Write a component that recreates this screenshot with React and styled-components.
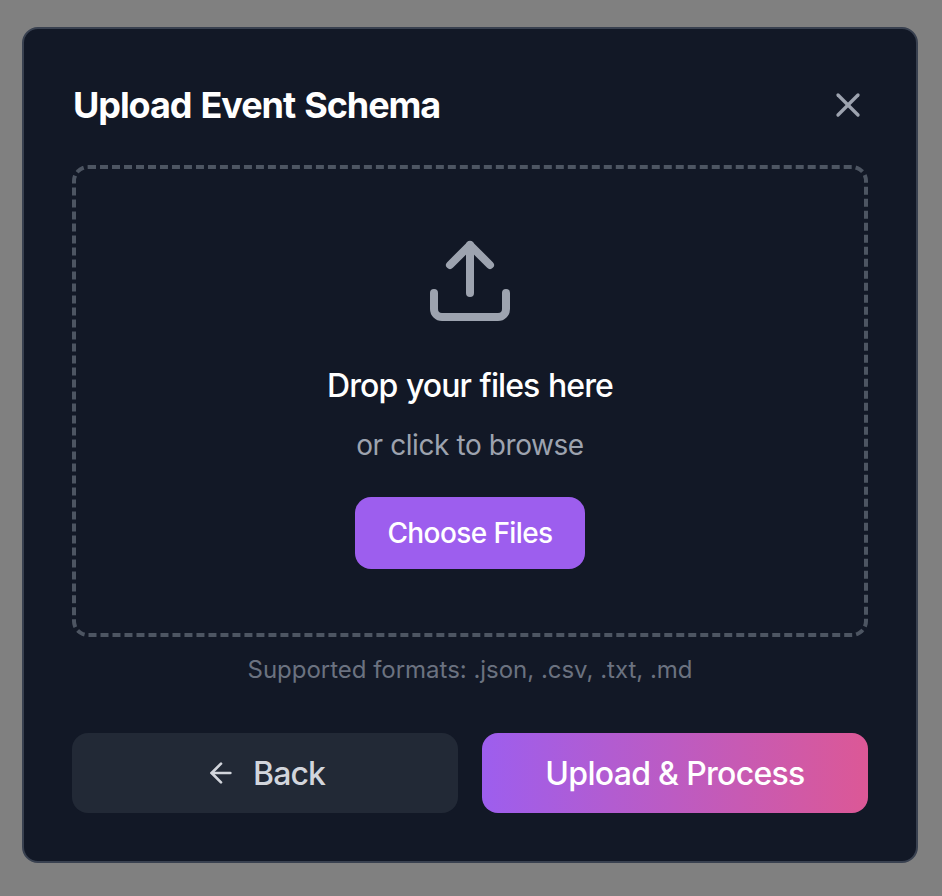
import React from 'react';
import styled, { createGlobalStyle } from 'styled-components';
import { X, Upload, ArrowLeft } from 'lucide-react';

const GlobalStyle = createGlobalStyle`
  *, *::before, *::after { box-sizing: border-box; }
  body { margin: 0; background: #808080; font-family: Inter, sans-serif; }
  h2, p { margin: 0; font-weight: 400; }
  button { font: inherit; border: 0; padding: 0; cursor: pointer; }
`;

const Backdrop = styled.div`
  min-height: 896px;
  padding: 27px 24px 33px 22px;
  background: #808080;
`;

const Modal = styled.section`
  height: 836px;
  padding: 48px;
  background: #121826;
  border: 2px solid #394150;
  border-radius: 16px;
`;

const Header = styled.header`
  display: flex;
  align-items: center;
  justify-content: space-between;
  height: 56px;
  margin-bottom: 32px;
`;

const Title = styled.h2`
  padding-left: 1px;
  color: #fff;
  font-size: 36px;
  font-weight: 650;
  line-height: 56px;
  letter-spacing: -1.08px;
  word-spacing: 1.8px;
  white-space: nowrap;
`;

const CloseButton = styled.button`
  display: flex;
  width: 40px;
  height: 40px;
  background: none;
  color: #9da3af;
`;

const DropZone = styled.div`
  display: flex;
  flex-direction: column;
  align-items: center;
  height: 472px;
  padding-top: 64px;
  border: 4px dashed #4d5562;
  border-radius: 16px;
  color: #9da3af;
`;

const Line = styled.p`
  color: ${(p) => p.$color};
  font-size: ${(p) => p.$size};
  font-weight: ${(p) => p.$weight || 400};
  line-height: ${(p) => p.$height};
  letter-spacing: ${(p) => p.$track};
  word-spacing: ${(p) => p.$words || 0};
  margin-top: ${(p) => p.$top};
  text-align: center;
  white-space: nowrap;
`;

const ChooseButton = styled.button`
  width: 230px;
  height: 72px;
  margin-top: 32px;
  border-radius: 16px;
  background: #9d5eee;
  color: #fff;
  font-size: 28px;
  font-weight: 470;
  letter-spacing: -0.6px;
`;

const Actions = styled.footer`
  display: grid;
  grid-template-columns: 1fr 1fr;
  gap: 24px;
  margin-top: 47px;
`;

const ActionButton = styled.button`
  display: flex;
  align-items: center;
  justify-content: center;
  gap: 16px;
  height: 80px;
  border-radius: 16px;
  background: ${(p) => (p.$primary ? 'linear-gradient(to right, #9d5eee, #dc5896)' : '#222936')};
  color: ${(p) => (p.$primary ? '#fff' : '#d2d5dc')};
  font-size: 32px;
  font-weight: 470;
  letter-spacing: ${(p) => (p.$primary ? '-0.7px' : '-0.9px')};
`;

export default function App() {
  return (
    <>
      <GlobalStyle />
      <Backdrop>
        <Modal>
          <Header>
            <Title>Upload Event Schema</Title>
            <CloseButton aria-label="Close"><X size={40} /></CloseButton>
          </Header>
          <DropZone>
            <Upload size={96} />
            <Line $color="#fff" $size="32px" $weight={450} $height="48px" $top="33px" $track="-0.9px" $words="0.9px">Drop your files here</Line>
            <Line $color="#9da3af" $size="28px" $height="40px" $top="15px" $track="-0.42px">or click to browse</Line>
            <ChooseButton>Choose Files</ChooseButton>
          </DropZone>
          <Line $color="#6b7280" $size="24px" $height="32px" $top="17px" $track="-0.02px">Supported formats: .json, .csv, .txt, .md</Line>
          <Actions>
            <ActionButton><ArrowLeft size={32} />Back</ActionButton>
            <ActionButton $primary>Upload &amp; Process</ActionButton>
          </Actions>
        </Modal>
      </Backdrop>
    </>
  );
}
